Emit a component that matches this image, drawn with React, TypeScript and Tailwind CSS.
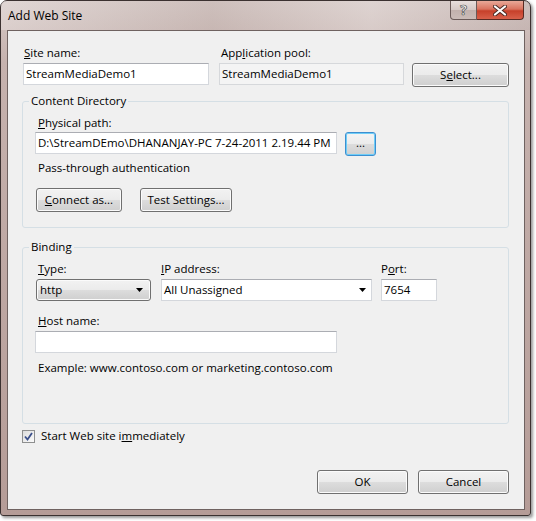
import React from "react";

const font = "font-['Open_Sans',_'Noto_Sans',_sans-serif]";

const btn =
  "flex items-center justify-center h-[24px] rounded-[3px] border border-[#707070] bg-[linear-gradient(#f2f2f2,#ebebeb_50%,#dddddd_50%,#cfcfcf)] shadow-[inset_0_0_0_1px_#fbfbfb] text-[11.5px] text-black";

const field =
  "flex items-center h-[22px] border border-[#d4d7dc] border-t-[#abadb3] bg-white pl-[2px] text-[11.5px] text-black whitespace-nowrap overflow-hidden";

const Arrow = () => (
  <svg width="8" height="5" viewBox="0 0 8 5" className="shrink-0">
    <path d="M0 0h7L3.5 4z" fill="#000" />
  </svg>
);

const Label = ({ children, className = "" }: { children: React.ReactNode; className?: string }) => (
  <div className={`h-[16px] leading-[16px] text-[11.5px] text-black whitespace-nowrap ${className}`}>{children}</div>
);

export default function App() {
  return (
    <div className={`w-[536px] h-[521px] bg-white ${font}`}>
      <div className="w-[531px] h-[516px] rounded-t-[7px] rounded-b-[3px] border border-[#3b3130] bg-[linear-gradient(#d6c9c6,#c6b2ae_12%,#b59c97)] shadow-[2px_2px_3px_rgba(0,0,0,0.4)] flex flex-col">
        {/* title bar */}
        <div className="relative h-[29px] flex items-center pl-[7px] bg-[linear-gradient(90deg,rgba(255,255,255,0.25),rgba(160,140,135,0.15)_40%,rgba(255,255,255,0.2)_70%,rgba(120,100,100,0.1))]">
          <span className="text-[12px] text-black leading-none">Add Web Site</span>
          <div className="absolute top-0 right-[6px] flex h-[19px]">
            <div className="w-[27px] h-full rounded-bl-[4px] border border-t-0 border-[#6a5a58] bg-[linear-gradient(#e8dedc,#d5c8c5_50%,#c2b1ad_50%,#cbbcb8)] flex items-center justify-center">
              <span className="text-[14px] font-bold text-white leading-none [-webkit-text-stroke:0.7px_#4a4a4a]">?</span>
            </div>
            <div className="w-[47px] h-full rounded-br-[4px] border border-l-0 border-t-0 border-[#5a2a22] bg-[linear-gradient(#e9a898,#d9735f_45%,#c7402a_55%,#d8604a)] flex items-center justify-center">
              <svg width="14" height="11" viewBox="0 0 14 11">
                <path d="M2 1.5L12 9.5M12 1.5L2 9.5" stroke="#4b2a24" strokeWidth="4" strokeLinecap="round" />
                <path d="M2 1.5L12 9.5M12 1.5L2 9.5" stroke="#ffffff" strokeWidth="2.2" strokeLinecap="round" />
              </svg>
            </div>
          </div>
        </div>

        {/* client area */}
        <div className="ml-[6px] w-[518px] h-[480px] border border-[#6f6260] bg-[#f0f0f0] flex flex-col">
          {/* row 1 */}
          <div className="flex items-start pt-[14px]">
            <div className="ml-[15px] w-[186px] flex flex-col">
              <Label className="pl-[1px]">
                <u>S</u>ite name:
              </Label>
              <div className={`mt-[2px] ${field}`}>StreamMediaDemo1</div>
            </div>
            <div className="ml-[10px] w-[185px] flex flex-col">
              <Label className="pl-[2px] text-[#8d8d8d]">
                App<u>l</u>ication pool:
              </Label>
              <div className="mt-[2px] flex items-center h-[22px] border border-[#d6d8db] bg-[#f4f4f4] pl-[2px] text-[11.5px] text-black">
                StreamMediaDemo1
              </div>
            </div>
            <div className={`ml-[8px] mt-[18px] w-[97px] ${btn}`}>
              S<u>e</u>lect...
            </div>
          </div>

          {/* Content Directory */}
          <fieldset className="mt-[6px] ml-[14px] w-[487px] border border-[#d5dfe5] rounded-[3px] pb-[15px]">
            <legend className="ml-[6px] px-[2px] h-[16px] leading-[16px] text-[11.5px] text-black">Content Directory</legend>
            <Label className="mt-[6px] ml-[15px]">
              <u>P</u>hysical path:
            </Label>
            <div className="mt-[1px] ml-[12px] flex items-start">
              <div className={`w-[302px] ${field}`}>D:\StreamDEmo\DHANANJAY-PC 7-24-2011 2.19.44 PM</div>
              <div className="ml-[8px] w-[31px] h-[24px] rounded-[3px] border border-[#3c8fd0] bg-[linear-gradient(#f4f4f4,#ebebeb_50%,#dcdcdc_50%,#d0d0d0)] shadow-[inset_0_0_0_1px_#6fcdf7] flex items-center justify-center text-[11.5px] leading-none pb-[2px]">
                ...
              </div>
            </div>
            <Label className="mt-[4px] ml-[15px]">Pass-through authentication</Label>
            <div className="mt-[12px] ml-[13px] flex">
              <div className={`w-[86px] ${btn}`}>
                <u>C</u>onnect as...
              </div>
              <div className={`ml-[18px] w-[92px] ${btn}`}>
                Test Settin<u>g</u>s...
              </div>
            </div>
          </fieldset>

          {/* Binding */}
          <fieldset className="mt-[11px] ml-[14px] w-[487px] border border-[#d5dfe5] rounded-[3px] pb-[47px]">
            <legend className="ml-[6px] px-[2px] h-[16px] leading-[16px] text-[11.5px] text-black">Binding</legend>
            <div className="mt-[6px] ml-[13px] flex items-start">
              <div className="w-[115px] flex flex-col">
                <Label className="pl-[2px]">
                  <u>T</u>ype:
                </Label>
                <div className="mt-[2px] h-[22px] rounded-[3px] border border-[#707070] bg-[linear-gradient(#f2f2f2,#ebebeb_50%,#dddddd_50%,#cfcfcf)] shadow-[inset_0_0_0_1px_#fbfbfb] flex items-center justify-between pl-[3px] pr-[6px] text-[11.5px]">
                  http
                  <Arrow />
                </div>
              </div>
              <div className="ml-[10px] w-[211px] flex flex-col">
                <Label>
                  <u>I</u>P address:
                </Label>
                <div className={`mt-[2px] justify-between pr-[4px] ${field}`}>
                  All Unassigned
                  <Arrow />
                </div>
              </div>
              <div className="ml-[9px] w-[56px] flex flex-col">
                <Label>
                  P<u>o</u>rt:
                </Label>
                <div className={`mt-[2px] ${field}`}>7654</div>
              </div>
            </div>
            <Label className="mt-[12px] ml-[15px]">
              <u>H</u>ost name:
            </Label>
            <div className={`mt-[2px] ml-[12px] w-[302px] ${field}`} />
            <Label className="mt-[7px] ml-[15px]">Example: www.contoso.com or marketing.contoso.com</Label>
          </fieldset>

          {/* checkbox */}
          <div className="mt-[4px] ml-[14px] flex items-center h-[16px]">
            <div className="w-[13px] h-[13px] border border-[#8e8f8f] bg-[linear-gradient(135deg,#dcdcdc,#fbfbfb)] p-[1px] flex items-center justify-center">
              <svg width="9" height="9" viewBox="0 0 9 9">
                <path d="M1 4.5L3.5 7.5L8 1" fill="none" stroke="#3b4f8a" strokeWidth="1.8" />
              </svg>
            </div>
            <span className="ml-[6px] text-[11.5px] leading-[16px] text-black">
              Start Web site i<u>m</u>mediately
            </span>
          </div>

          {/* OK / Cancel */}
          <div className="mt-[26px] mr-[15px] flex justify-end">
            <div className={`w-[91px] ${btn}`}>OK</div>
            <div className={`ml-[10px] w-[91px] ${btn}`}>Cancel</div>
          </div>
        </div>
      </div>
    </div>
  );
}
